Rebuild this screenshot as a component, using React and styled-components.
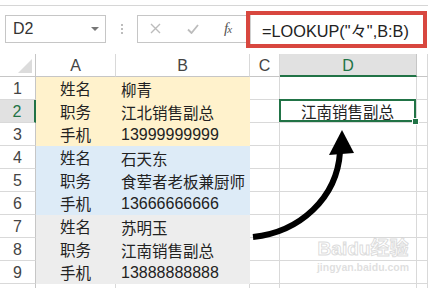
import React from "react";
import styled, { createGlobalStyle } from "styled-components";

const GlobalStyle = createGlobalStyle`
  html, body { margin: 0; padding: 0; background: #ffffff; }
  body { font-family: "Liberation Sans", "Noto Sans CJK SC", sans-serif; }
`;

const GREEN = "#217346";
const GRID = "#d9d9d9";
const FILLS = { y: "#fff2cc", b: "#ddebf7", g: "#ededed" };

const Page = styled.div`
  position: relative;
  width: 436px;
  height: 293px;
  overflow: hidden;
  background: #fff;
`;

const TopLine = styled.div`
  margin-top: 5px;
  width: 428px;
  height: 1px;
  background: #d6d6d6;
`;

const FormulaBar = styled.div`
  display: flex;
  align-items: center;
  height: 47px;
  padding-left: 5px;
`;

const NameBox = styled.div`
  box-sizing: border-box;
  width: 101px;
  height: 28px;
  margin-top: -2px;
  border: 1px solid #c6c6c6;
  display: flex;
  align-items: center;
  justify-content: space-between;
  padding: 0 6px 0 7px;
  font-size: 16px;
  color: #333;
`;

const DropArrow = styled.span`
  width: 0;
  height: 0;
  border-left: 4px solid transparent;
  border-right: 4px solid transparent;
  border-top: 4px solid #777;
`;

const Dots = styled.div`
  display: flex;
  flex-direction: column;
  gap: 2px;
  margin: -2px 14px 0 15px;
  & > span {
    width: 2px;
    height: 2px;
    background: #bdbdbd;
  }
`;

const FxGroup = styled.div`
  box-sizing: border-box;
  width: 109px;
  height: 28px;
  margin-top: -2px;
  border: 1px solid #c6c6c6;
  border-right: none;
  display: flex;
  align-items: center;
  padding-left: 12px;
  gap: 26px;
`;

const Fx = styled.span`
  font-family: "Liberation Serif", serif;
  font-style: italic;
  font-size: 15px;
  color: #555;
  letter-spacing: -1px;
  margin-left: -1px;
  & small { font-size: 11px; }
`;

const Highlight = styled.div`
  box-sizing: border-box;
  width: 181px;
  height: 37px;
  border: 4px solid #d8473f;
  background: #fff;
  display: flex;
  align-items: center;
`;

const FormulaInput = styled.div`
  flex: 1;
  height: 100%;
  border-left: 1px solid #cfcfcf;
  display: flex;
  align-items: center;
  padding-left: 11px;
  font-size: 16.3px;
  color: #222;
  white-space: nowrap;
`;

const Sheet = styled.div`
  position: relative;
  margin-top: 1px;
  width: 428px;
  height: 234px;
  overflow: hidden;
  display: grid;
  grid-template-columns: 36px 80px 134px 30px 137px 11px;
  grid-auto-rows: 23px;
  align-content: start;
`;

const Cell = styled.div`
  position: relative;
  box-sizing: border-box;
  display: flex;
  align-items: center;
  justify-content: ${(p) => (p.$align === "center" ? "center" : "flex-start")};
  padding: ${(p) => (p.$align === "center" ? "0" : "1px 0 0 5px")};
  background: ${(p) => p.$fill || "#fff"};
  border-right: 1px solid ${(p) => p.$fill || GRID};
  border-bottom: 1px solid ${(p) => p.$fill || GRID};
  font-family: "Noto Sans CJK SC", "Liberation Sans", sans-serif;
  font-size: 15.5px;
  color: #222;
  white-space: nowrap;
  overflow: visible;
  z-index: ${(p) => (p.$fill ? 1 : 0)};
  ${(p) => (p.$num ? `font-family: "Liberation Sans", sans-serif; font-size: 16px;` : "")}
`;

const ColHead = styled.div`
  box-sizing: border-box;
  display: flex;
  align-items: center;
  justify-content: center;
  padding-top: 2px;
  font-size: 16px;
  color: ${(p) => (p.$active ? GREEN : "#444")};
  background: ${(p) => (p.$active ? "#e1e1e1" : "#fff")};
  border-right: 1px solid ${(p) => (p.$active ? "#c6c6c6" : GRID)};
  border-bottom: ${(p) => (p.$active ? `2px solid ${GREEN}` : "1px solid #c6c6c6")};
`;

const Corner = styled.div`
  position: relative;
  box-sizing: border-box;
  border-right: 1px solid #c6c6c6;
  border-bottom: 1px solid #c6c6c6;
  background: #fff;
  &::after {
    content: "";
    position: absolute;
    right: 3px;
    bottom: 3px;
    width: 0;
    height: 0;
    border-left: 14px solid transparent;
    border-bottom: 14px solid #dcdcdc;
  }
`;

const RowHead = styled.div`
  box-sizing: border-box;
  display: flex;
  align-items: center;
  justify-content: center;
  padding-top: 2px;
  font-size: 16px;
  color: ${(p) => (p.$active ? GREEN : "#444")};
  background: ${(p) => (p.$active ? "#e1e1e1" : "#fff")};
  border-bottom: 1px solid ${GRID};
  border-right: ${(p) => (p.$active ? `2px solid ${GREEN}` : "1px solid #c6c6c6")};
`;

const Selected = styled(Cell)`
  justify-content: center;
  padding: 0;
  box-shadow: inset 0 0 0 2px ${GREEN};
  margin: -1px 0 0 -1px;
  width: calc(100% + 1px);
  height: calc(100% + 1px);
  z-index: 2;
`;

const Handle = styled.span`
  position: absolute;
  right: -3px;
  bottom: -3px;
  width: 5px;
  height: 5px;
  background: ${GREEN};
  border: 1px solid #fff;
`;

const Overlay = styled.svg`
  position: absolute;
  left: 0;
  top: 0;
  z-index: 5;
  pointer-events: none;
`;

const Watermark = styled.div`
  position: absolute;
  left: 318px;
  top: 237px;
  width: 90px;
  z-index: 4;
  display: flex;
  flex-direction: column;
  align-items: center;
  pointer-events: none;
  white-space: nowrap;
`;

const WmLogo = styled.div`
  font-family: "Liberation Sans", "Noto Sans CJK SC", sans-serif;
  font-weight: bold;
  font-size: 19px;
  line-height: 24px;
  color: rgba(255, 255, 255, 0.5);
  -webkit-text-stroke: 1px rgba(205, 205, 205, 0.7);
`;

const WmUrl = styled.div`
  font-family: "Liberation Sans", sans-serif;
  font-weight: bold;
  font-size: 10.5px;
  line-height: 13px;
  color: rgba(215, 215, 215, 0.8);
`;

const rows = [
  ["姓名", "柳青", "y"],
  ["职务", "江北销售副总", "y"],
  ["手机", "13999999999", "y"],
  ["姓名", "石天东", "b"],
  ["职务", "食荤者老板兼厨师", "b"],
  ["手机", "13666666666", "b"],
  ["姓名", "苏明玉", "g"],
  ["职务", "江南销售副总", "g"],
  ["手机", "13888888888", "g"],
];

export default function App() {
  return (
    <Page>
      <GlobalStyle />
      <TopLine />
      <FormulaBar>
        <NameBox>
          D2
          <DropArrow />
        </NameBox>
        <Dots>
          <span />
          <span />
          <span />
        </Dots>
        <FxGroup>
          <svg width="11" height="11" viewBox="0 0 11 11">
            <path d="M1 1 L10 10 M10 1 L1 10" stroke="#bcbcbc" strokeWidth="1.4" fill="none" />
          </svg>
          <svg width="12" height="10" viewBox="0 0 12 10">
            <path d="M1 5.5 L4.5 9 L11 1" stroke="#bcbcbc" strokeWidth="1.8" fill="none" />
          </svg>
          <Fx>
            f<small>x</small>
          </Fx>
        </FxGroup>
        <Highlight>
          <FormulaInput>=LOOKUP("々",B:B)</FormulaInput>
        </Highlight>
      </FormulaBar>
      <Sheet>
        <Corner />
        <ColHead>A</ColHead>
        <ColHead>B</ColHead>
        <ColHead>C</ColHead>
        <ColHead $active>D</ColHead>
        <ColHead />
        {rows.map(([a, b, f], i) => (
          <React.Fragment key={i}>
            <RowHead $active={i === 1}>{i + 1}</RowHead>
            <Cell $fill={FILLS[f]} $align="center">
              {a}
            </Cell>
            <Cell $fill={FILLS[f]} $num={/^\d+$/.test(b)}>
              {b}
            </Cell>
            <Cell />
            {i === 1 ? (
              <Selected>
                江南销售副总
                <Handle />
              </Selected>
            ) : (
              <Cell />
            )}
            <Cell />
          </React.Fragment>
        ))}
        <RowHead />
        <Cell />
        <Cell />
        <Cell />
        <Cell />
        <Cell />
      </Sheet>
      <Watermark>
        <WmLogo>Baidu经验</WmLogo>
        <WmUrl>jingyan.baidu.com</WmUrl>
      </Watermark>
      <Overlay width="436" height="293" viewBox="0 0 436 293">
        <path d="M253 237 C300 232 337 198 340 152" stroke="#000" strokeWidth="6" fill="none" />
        <polygon points="342,130 329,155 354,153" fill="#000" />
      </Overlay>
    </Page>
  );
}
